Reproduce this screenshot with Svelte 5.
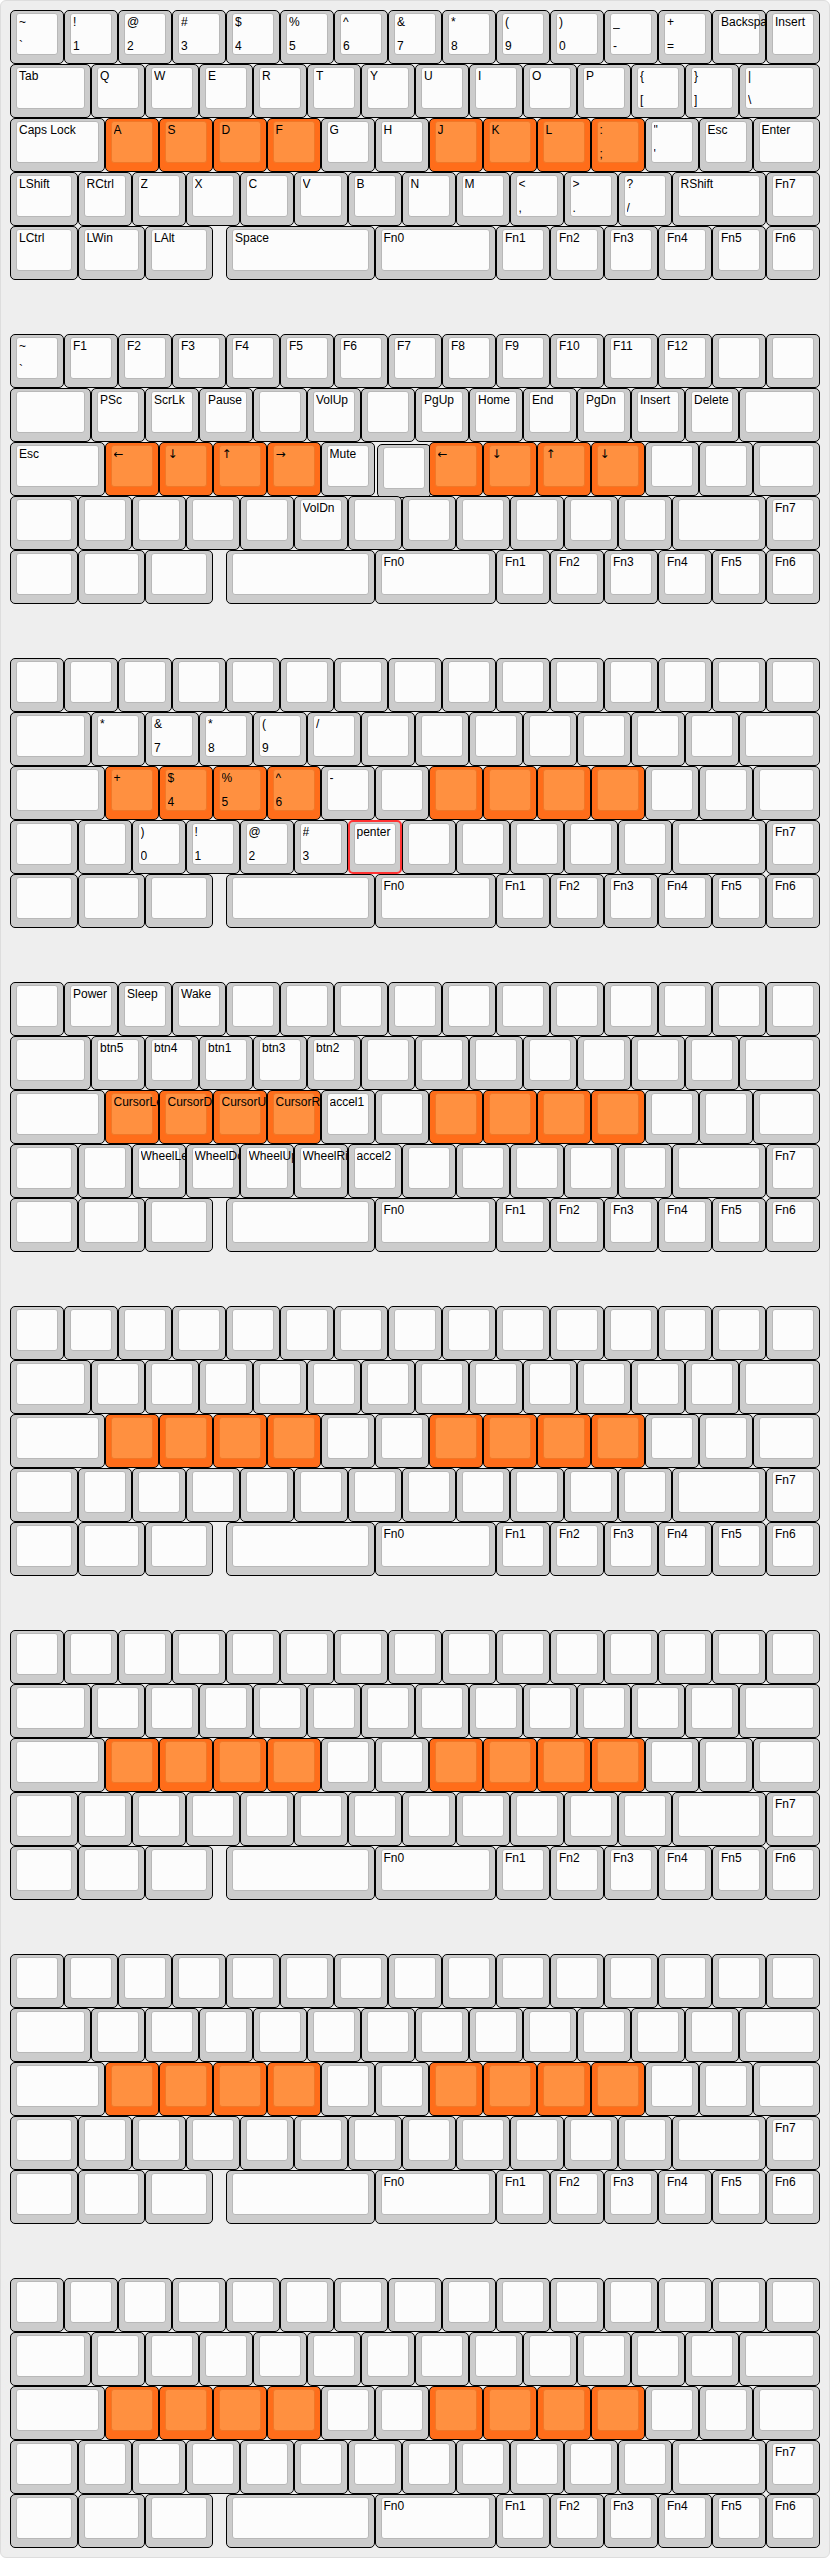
<script>
  // Key widths are counted in quarters of a standard key; a negative width is an empty gap.
  const widths = [
    Array(15).fill(4),
    [6, ...Array(12).fill(4), 6],
    [7, ...Array(12).fill(4), 5],
    [5, ...Array(11).fill(4), 7, 4],
    [5, 5, 5, -1, 11, 9, ...Array(6).fill(4)],
  ];

  const homeKeys = [1, 2, 3, 4, 7, 8, 9, 10];
  const fnRow = '     Fn0 Fn1 Fn2 Fn3 Fn4 Fn5 Fn6'.split(' ');
  const fn7 = { 13: 'Fn7' };

  // Each legend is the top text, optionally followed by "\n" and the bottom text.
  const layers = [
    [
      ['~\n`', '!\n1', '@\n2', '#\n3', '$\n4', '%\n5', '^\n6', '&\n7', '*\n8', '(\n9', ')\n0', '_\n-', '+\n=', 'Backspace', 'Insert'],
      ['Tab', 'Q', 'W', 'E', 'R', 'T', 'Y', 'U', 'I', 'O', 'P', '{\n[', '}\n]', '|\n\\'],
      ['Caps Lock', 'A', 'S', 'D', 'F', 'G', 'H', 'J', 'K', 'L', ':\n;', '"\n\'', 'Esc', 'Enter'],
      ['LShift', 'RCtrl', 'Z', 'X', 'C', 'V', 'B', 'N', 'M', '<\n,', '>\n.', '?\n/', 'RShift', 'Fn7'],
      ['LCtrl', 'LWin', 'LAlt', '', 'Space', 'Fn0', 'Fn1', 'Fn2', 'Fn3', 'Fn4', 'Fn5', 'Fn6'],
    ],
    [
      ['~\n`', 'F1', 'F2', 'F3', 'F4', 'F5', 'F6', 'F7', 'F8', 'F9', 'F10', 'F11', 'F12'],
      ['', 'PSc', 'ScrLk', 'Pause', '', 'VolUp', '', 'PgUp', 'Home', 'End', 'PgDn', 'Insert', 'Delete'],
      ['Esc', '←', '↓', '↑', '→', 'Mute', '', '←', '↓', '↑', '↓'],
      { 5: 'VolDn', ...fn7 },
      fnRow,
    ],
    [
      [],
      ['', '*', '&\n7', '*\n8', '(\n9', '/'],
      ['', '+', '$\n4', '%\n5', '^\n6', '-'],
      { 2: ')\n0', 3: '!\n1', 4: '@\n2', 5: '#\n3', 6: 'penter', ...fn7 },
      fnRow,
    ],
    [
      ['', 'Power', 'Sleep', 'Wake'],
      ['', 'btn5', 'btn4', 'btn1', 'btn3', 'btn2'],
      ['', 'CursorLeft', 'CursorDown', 'CursorUp', 'CursorRight', 'accel1'],
      { 2: 'WheelLeft', 3: 'WheelDown', 4: 'WheelUp', 5: 'WheelRight', 6: 'accel2', ...fn7 },
      fnRow,
    ],
    ...Array.from({ length: 4 }, () => [[], [], [], fn7, fnRow]),
  ];
</script>

<main class="keyboard">
  {#each layers as layer, l}
    <section class="layer" aria-label="Layer {l}">
      {#each widths as row, r}
        {#each row as width, k}
          {#if width < 0}
            <span style="grid-column: span {-width}"></span>
          {:else}
            {@const legend = (layer[r][k] ?? '').split('\n')}
            <div
              class="key"
              class:home={r === 2 && homeKeys.includes(k)}
              class:selected={l === 2 && r === 3 && k === 6}
              class:shifted={l === 1 && r === 2 && k === 6}
              style="grid-column: span {width}"
            >
              <div class="cap">
                {#each legend as text}
                  <span class="legend" class:arrow={/[←-↓]/.test(text)}>{text}</span>
                {/each}
              </div>
            </div>
          {/if}
        {/each}
      {/each}
    </section>
  {/each}
</main>

<style>
  .keyboard {
    box-sizing: border-box;
    display: grid;
    gap: 54px;
    padding: 9px;
    border: 1px solid #ddd;
    border-radius: 6px;
    background: #eee;
    color: #000;
    font: 12px/12px "Liberation Sans", Arial, sans-serif;
  }

  .layer {
    display: grid;
    grid-template-columns: repeat(60, minmax(0, 1fr));
    grid-auto-rows: 54px;
  }

  .key {
    box-sizing: border-box;
    min-width: 0;
    padding: 2px 5px 9px;
    border: 1px solid #000;
    border-radius: 5px;
    background: #ccc;
  }

  .cap {
    box-sizing: border-box;
    display: grid;
    grid-template-rows: 12px 12px;
    row-gap: 12px;
    height: 42px;
    padding: 2px;
    border: 1px solid #b8b8b8;
    border-radius: 3px;
    background: #fcfcfc;
  }

  .legend {
    position: relative;
    z-index: 1;
    height: 15px;
    margin-right: -9px;
    overflow: hidden;
    white-space: nowrap;
  }

  .arrow {
    font-family: "DejaVu Sans", sans-serif;
  }

  .home {
    background: #ff6d1a;
  }

  .home .cap {
    border-color: #f07828;
    background: #ff9040;
  }

  .selected {
    padding: 1px 4px 8px;
    border: 2px solid #f33;
  }

  .shifted {
    margin: 2px -2px -2px 2px;
  }
</style>
